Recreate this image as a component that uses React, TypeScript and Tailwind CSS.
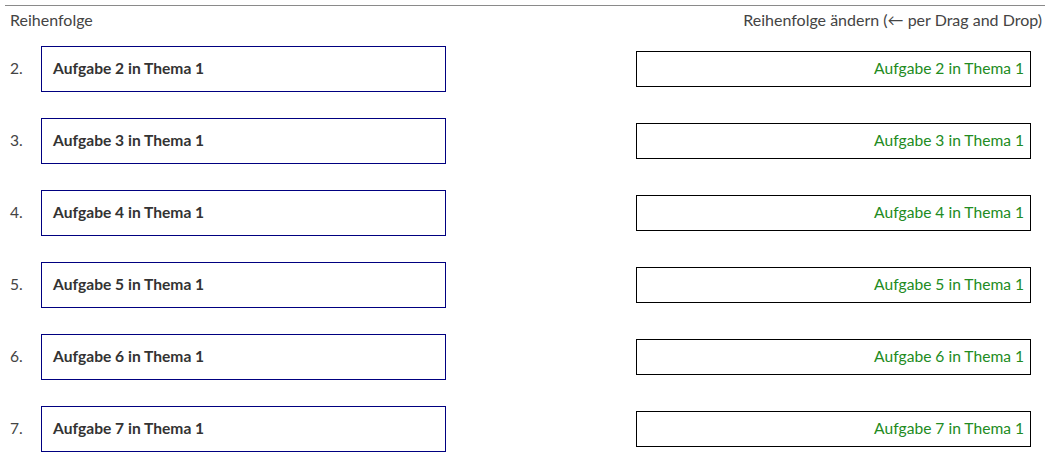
const items = [2, 3, 4, 5, 6, 7];

export default function App() {
  return (
    <div className="bg-white min-h-[453px] font-['Lato','Liberation_Sans',sans-serif] text-[15.6px]">
      <div className="pt-[5px] px-[5px]">
        <div className="border-t border-[#8a8a8a] w-[1040px]">
          <div className="flex justify-between items-center h-[28px] pl-[5px] pr-[3px] text-[16px] text-[#444]">
            <span>Reihenfolge</span>
            <span>Reihenfolge ändern (← per Drag and Drop)</span>
          </div>
          <div className="pt-[12px]">
            {items.map((n) => (
              <div key={n} className="flex items-center h-[46px] mb-[26px] last:mb-0">
                <div className="w-[36px] pl-[5px] text-[#444]">{n}.</div>
                <div className="w-[405px] h-[46px] border border-[#000080] flex items-center pl-[11px] font-bold text-[#333]">
                  Aufgabe {n} in Thema 1
                </div>
                <div className="ml-[190px] w-[395px] h-[36px] border border-black flex items-center justify-end pr-[6px] text-[#228b22]">
                  Aufgabe {n} in Thema 1
                </div>
              </div>
            ))}
          </div>
        </div>
      </div>
    </div>
  );
}
